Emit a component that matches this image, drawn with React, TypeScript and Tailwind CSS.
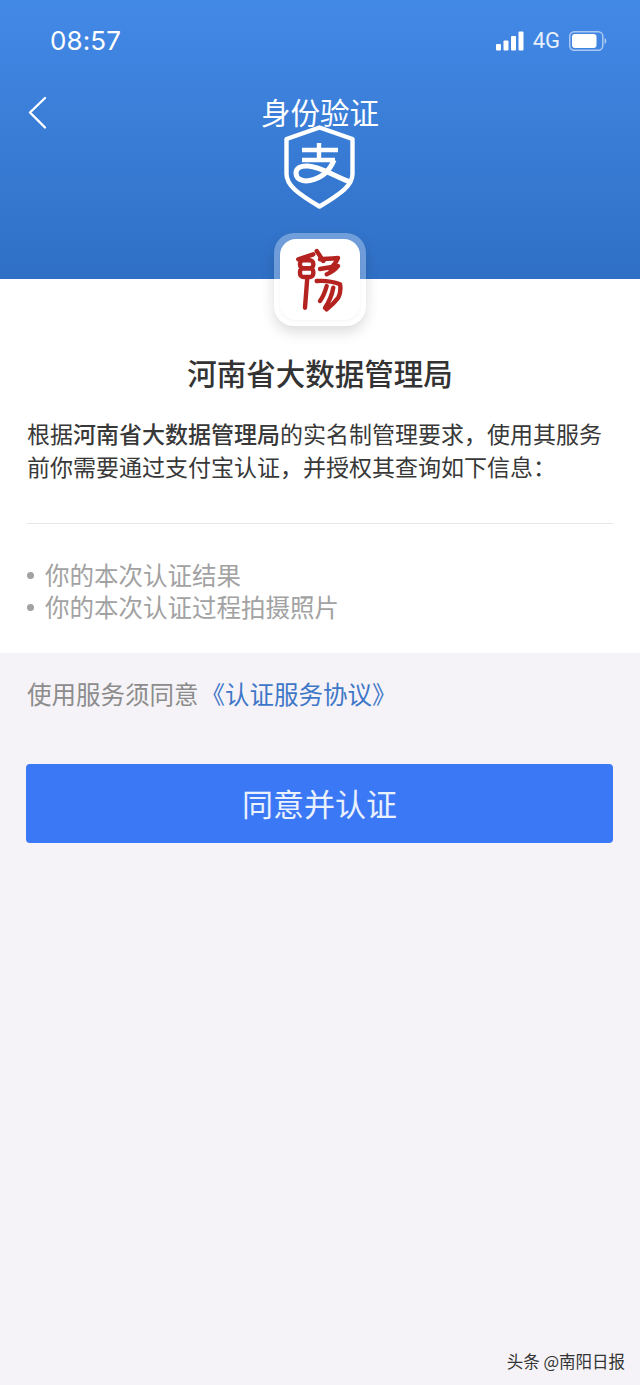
const cjk = { fontFamily: '"Noto Sans CJK SC", "Noto Sans", sans-serif' };

function Signal() {
  return (
    <svg width="28" height="20" viewBox="0 0 28 20" fill="#ffffff">
      <rect x="0" y="13" width="5" height="6.500" rx="1" />
      <rect x="7.500" y="9.500" width="5" height="10" rx="1" />
      <rect x="15" y="5" width="5" height="14.500" rx="1" />
      <rect x="22.500" y="0.500" width="5" height="19" rx="1" />
    </svg>
  );
}

function Battery() {
  return (
    <svg width="38" height="20" viewBox="0 0 38 20">
      <rect x="0.750" y="0.750" width="33" height="18.500" rx="4.500" fill="none" stroke="#a9c8f2" strokeWidth="1.500" />
      <rect x="3" y="3" width="24.500" height="14" rx="3" fill="#ffffff" />
      <path d="M35.500 7v6c1.200-.4 1.800-1.600 1.800-3S36.700 7.400 35.500 7z" fill="#a9c8f2" />
    </svg>
  );
}

function Shield() {
  return (
    <svg width="72" height="85" viewBox="0 0 72 85" fill="none" stroke="#ffffff">
      <path d="M35.500 2.500 L68.500 14 V49 C68.500 60 58 68 35.500 81.500 C13 68 2.500 60 2.500 49 V14 Z" strokeWidth="4.400" strokeLinejoin="round" />
      <path d="M18 25 H54 M35 18 V35 M18 35 H51" strokeWidth="4.400" />
      <path d="M50 35 C46 45 38 53 26 55.500 C18 57 12 54 12 48 C12 43 17 40.500 24 41 C36 41.500 48 50 66 57" strokeWidth="5" />
    </svg>
  );
}

function SealMark() {
  return (
    <svg width="50" height="64" viewBox="0 0 50 64" fill="none" stroke="#b4231f" strokeWidth="4.400" strokeLinecap="round" strokeLinejoin="round">
      <path d="M3.300 11.300 L18.300 6.300" />
      <rect x="5" y="12.300" width="13.300" height="8" rx="3.500" />
      <rect x="5" y="20.300" width="13.300" height="8.700" rx="3.500" />
      <path d="M12.300 29.700 L10 59.700" />
      <path d="M21.700 3 L28.300 13" />
      <path d="M25 11.300 C31 11 37 10.500 43 10 C41 15 38 18 35 21" />
      <path d="M25 21 C31 20 37 19 43 18 C40 22 36 24.500 31.700 26.300" />
      <path d="M21.700 33 C30 32.500 38 33.500 45 36.300 C46 41 45 46 43.300 49.700 C40 54 36 58 31.700 61.300" />
      <path d="M31.700 38 C30 44 28 49 25 53" />
      <path d="M38.300 39.700 C37 47 34 54 30 60" />
    </svg>
  );
}

export default function App() {
  return (
    <div className="relative flex h-[1385px] w-[640px] flex-col overflow-hidden bg-[#f5f3f7]" style={cjk}>
      <header className="flex h-[279px] flex-col bg-gradient-to-b from-[#4389e6] to-[#2f70c6] text-white">
        <div className="flex h-[81px] items-center justify-between pl-[50px] pr-[33px]">
          <span className="text-[26px] tracking-[0.1px]" style={{ fontFamily: 'Inter, sans-serif' }}>08:57</span>
          <div className="flex items-center gap-[9px]">
            <Signal />
            <span className="text-[22px] leading-none text-[#e6f0fc]" style={{ fontFamily: 'Roboto, sans-serif' }}>4G</span>
            <Battery />
          </div>
        </div>
        <div className="relative flex h-[62px] items-center justify-center">
          <svg className="absolute left-[28px] top-[15px]" width="20" height="34" viewBox="0 0 20 34" fill="none" stroke="#ffffff" strokeWidth="2.400" strokeLinecap="round" strokeLinejoin="round">
            <path d="M17 2 L2 16.500 L17 31.500" />
          </svg>
          <h1 className="text-[29.500px] leading-none font-normal">身份验证</h1>
        </div>
        <div className="-mt-[18px] flex justify-center">
          <Shield />
        </div>
      </header>

      <div className="absolute left-[274px] top-[233px] flex h-[93px] w-[92px] items-center justify-center rounded-[20px] bg-white/30 shadow-[0_6px_14px_rgba(0,0,0,0.14)]">
        <div className="flex h-[81px] w-[80px] items-center justify-center rounded-[16px] bg-white shadow-[0_1px_3px_rgba(0,0,0,0.05)]">
          <SealMark />
        </div>
      </div>

      <section className="flex h-[374px] flex-col bg-white px-[27px]">
        <h2 className="mt-[72px] text-center text-[29.500px] leading-[42px] font-medium text-[#333333]">河南省大数据管理局</h2>
        <p className="mt-[24px] text-[23px] leading-[32.500px] whitespace-nowrap text-[#383838]">
          根据<span className="font-medium">河南省大数据管理局</span>的实名制管理要求，使用其服务
          <br />
          前你需要通过支付宝认证，并授权其查询如下信息：
        </p>
        <div className="mt-[41px] h-px w-[586px] bg-[#e6e6e6]" />
        <ul className="mt-[35px] text-[24.500px] leading-[32px] text-[#a2a2a2]">
          <li className="flex items-center gap-[11px]">
            <span className="h-[7px] w-[7px] rounded-full bg-[#a2a2a2]" />
            你的本次认证结果
          </li>
          <li className="flex items-center gap-[11px]">
            <span className="h-[7px] w-[7px] rounded-full bg-[#a2a2a2]" />
            你的本次认证过程拍摄照片
          </li>
        </ul>
      </section>

      <div className="flex flex-col px-[27px]">
        <p className="mt-[23px] text-[24.500px] leading-[35px] whitespace-nowrap text-[#8c8c8c]">
          使用服务须同意<span className="ml-[2px] text-[#3f77c8]">《认证服务协议》</span>
        </p>
        <button className="mt-[53px] -ml-px flex h-[79px] w-[587px] items-center justify-center rounded-[4px] bg-[#3b78f5] text-[31px] text-[#eaf1fe]">
          同意并认证
        </button>
      </div>

      <div className="absolute right-[15px] bottom-[13px] text-[16.500px] leading-[22px] text-[#333333]">头条 @南阳日报</div>
    </div>
  );
}
